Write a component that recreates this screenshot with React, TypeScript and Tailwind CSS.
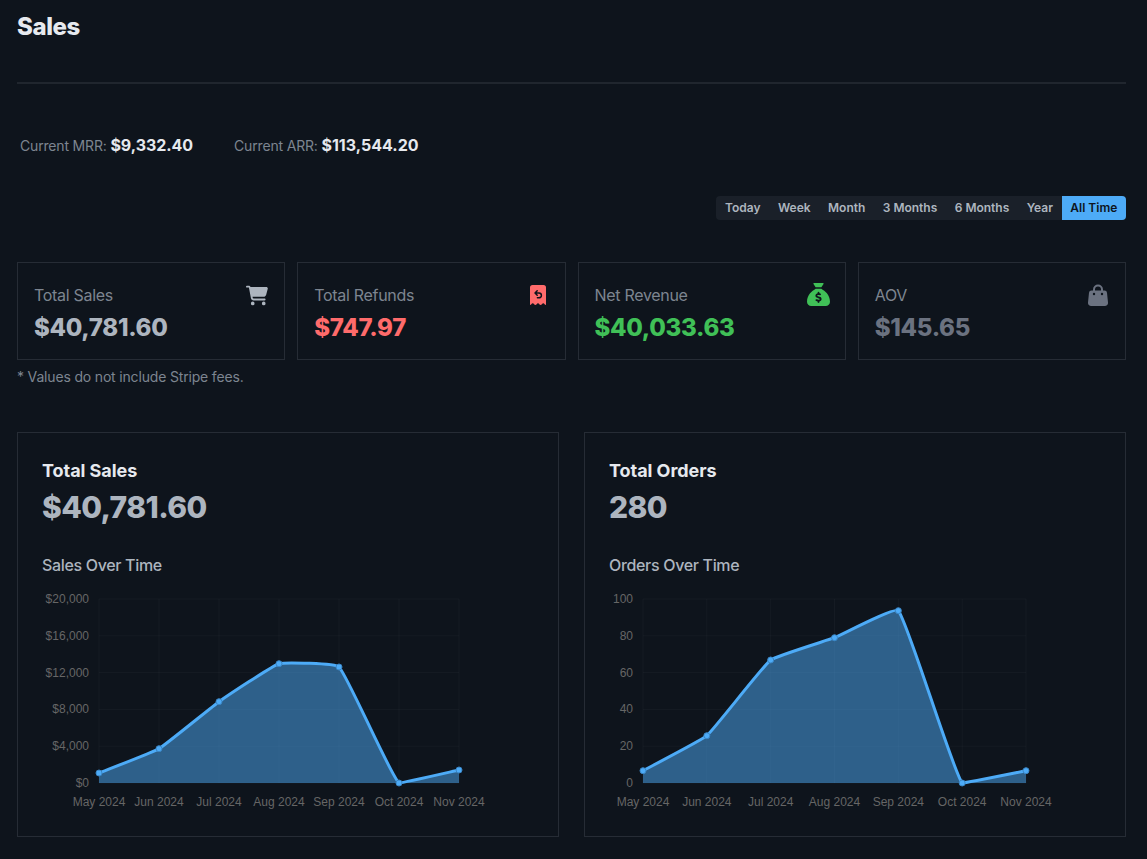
import type { ReactNode } from "react";
import { FaCartShopping, FaSackDollar } from "react-icons/fa6";

const ranges = ["Today", "Week", "Month", "3 Months", "6 Months", "Year"];
const months = ["May 2024", "Jun 2024", "Jul 2024", "Aug 2024", "Sep 2024", "Oct 2024", "Nov 2024"];

type Pt = [number, number];

const TOP = 11;
const BOTTOM = 195;

// same idea as a chart.js spline with low tension, control points kept inside the plot
const linePath = (pts: Pt[]) => {
  const tension = 0.1;
  const ctrl = pts.map((p, i) => {
    const prev = pts[Math.max(i - 1, 0)];
    const next = pts[Math.min(i + 1, pts.length - 1)];
    const d1 = Math.hypot(p[0] - prev[0], p[1] - prev[1]);
    const d2 = Math.hypot(next[0] - p[0], next[1] - p[1]);
    const fa = (tension * d1) / (d1 + d2);
    const fb = (tension * d2) / (d1 + d2);
    const clamp = (y: number) => Math.min(BOTTOM, Math.max(TOP, y));
    return {
      inn: [p[0] - fa * (next[0] - prev[0]), clamp(p[1] - fa * (next[1] - prev[1]))],
      out: [p[0] + fb * (next[0] - prev[0]), clamp(p[1] + fb * (next[1] - prev[1]))],
    };
  });
  let d = `M${pts[0][0]} ${pts[0][1]}`;
  for (let i = 0; i < pts.length - 1; i++) {
    d += ` C${ctrl[i].out[0]} ${ctrl[i].out[1]} ${ctrl[i + 1].inn[0]} ${ctrl[i + 1].inn[1]} ${pts[i + 1][0]} ${pts[i + 1][1]}`;
  }
  return d;
};

const AreaChart = ({ points, ticks, left, right }: { points: number[]; ticks: string[]; left: number; right: number }) => {
  const step = (right - left) / 6;
  const pts: Pt[] = points.map((y, i) => [left + step * i, y]);
  const line = linePath(pts);
  return (
    <svg width="492" height="226" viewBox="0 0 492 226" className="block mt-[11px]">
      {ticks.map((_, i) => {
        const y = TOP + ((BOTTOM - TOP) * i) / 5;
        return <line key={i} x1={left} x2={right} y1={y} y2={y} stroke="#ffffff" strokeOpacity="0.03" />;
      })}
      {months.map((_, i) => (
        <line key={i} x1={left + step * i} x2={left + step * i} y1={TOP} y2={BOTTOM} stroke="#ffffff" strokeOpacity="0.03" />
      ))}
      <path d={`${line} L${right} ${BOTTOM} L${left} ${BOTTOM} Z`} fill="#4dabf7" fillOpacity="0.5" />
      <path d={line} fill="none" stroke="#4dabf7" strokeWidth="3" />
      {pts.map(([x, y], i) => (
        <circle key={i} cx={x} cy={y} r="3" fill="#4dabf7" stroke="#3a85c4" />
      ))}
      {ticks.map((label, i) => (
        <text key={label} x={left - 10} y={TOP + ((BOTTOM - TOP) * i) / 5 + 4} textAnchor="end" fontSize="12" fill="#666666" fontFamily="'Liberation Sans', sans-serif">
          {label}
        </text>
      ))}
      {months.map((label, i) => (
        <text key={label} x={left + step * i} y={218} textAnchor="middle" fontSize="12" fill="#666666" fontFamily="'Liberation Sans', sans-serif">
          {label}
        </text>
      ))}
    </svg>
  );
};

const RefundIcon = () => (
  <svg width="16" height="20" viewBox="0 0 16 20" className="mt-[1px] mr-[3px]">
    <path
      d="M2.5 0H13.5A2.5 2.5 0 0 1 16 2.5V20C14.8 20 14.4 18.2 13.3 18.2S11.6 20 10.6 20 9.1 18.2 8 18.2 6.4 20 5.4 20 3.9 18.2 2.7 18.2 1.2 20 0 20V2.5A2.5 2.5 0 0 1 2.5 0Z"
      fill="#ff6b6b"
    />
    <path d="M7.2 5.8 5 8l2.2 2.2M5.2 8H9a2.4 2.4 0 0 1 0 4.8H7.4" fill="none" stroke="#0e141c" strokeWidth="1.5" strokeLinecap="round" strokeLinejoin="round" />
  </svg>
);

const BagIcon = () => (
  <svg width="20" height="22" viewBox="0 0 20 22" className="mt-0 mr-[1px]">
    <path d="M6 8V5.5a4 4 0 0 1 8 0V8" fill="none" stroke="#6b7280" strokeWidth="2" />
    <path d="M3.5 6.5H16.5A2.5 2.5 0 0 1 19 8.8L20 18.5A3.2 3.2 0 0 1 16.8 22H3.2A3.2 3.2 0 0 1 0 18.5L1 8.8A2.5 2.5 0 0 1 3.5 6.5Z" fill="#6b7280" />
    <circle cx="6" cy="10" r="1.2" fill="#0e141c" />
    <circle cx="14" cy="10" r="1.2" fill="#0e141c" />
  </svg>
);

const StatCard = ({ label, value, icon, valueClass }: { label: string; value: string; icon: ReactNode; valueClass: string }) => (
  <div className="border border-[#262c35] h-[98px] pl-4 pr-[16px] pt-[21px] flex justify-between">
    <div>
      <div className="text-base leading-[22px] tracking-[-0.3px] text-[#7d8590]">{label}</div>
      <div className={`text-2xl leading-[32px] font-extrabold tracking-[-0.3px] mt-[6px] ${valueClass}`}>{value}</div>
    </div>
    {icon}
  </div>
);

const ChartCard = ({ title, value, sub, children }: { title: string; value: string; sub: string; children: ReactNode }) => (
  <div className="border border-[#262c35] h-[405px] px-6 pt-[26px]">
    <h3 className="text-lg leading-6 font-bold tracking-[-0.05px] text-[#e6e9ee]">{title}</h3>
    <div className="text-[30px] leading-9 font-extrabold tracking-[-0.6px] text-[#adb5bf] mt-[6px]">{value}</div>
    <div className="text-base leading-6 font-medium tracking-[-0.33px] text-[#adb5bf] mt-[28px]">{sub}</div>
    {children}
  </div>
);

export default function App() {
  return (
    <div className="min-h-[859px] bg-[#0e141c] pl-[17px] pr-[21px] pt-[11px] font-['Inter',sans-serif]">
      <h1 className="text-[24px] leading-8 font-extrabold tracking-[-0.4px] text-[#e6e9ee]">Sales</h1>
      <hr className="mt-[39px] border-t-2 border-[#20262e]" />

      <div className="flex mt-[49px] pl-[3px] gap-[41px] text-sm leading-6 tracking-[-0.17px] text-[#7d8590]">
        <div>
          Current MRR: <span className="text-base font-bold tracking-[-0.05px] text-[#e6e9ee]">$9,332.40</span>
        </div>
        <div>
          Current ARR: <span className="text-base font-bold tracking-[0px] text-[#e6e9ee]">$113,544.20</span>
        </div>
      </div>

      <div className="flex justify-end mt-[38px]">
        <div className="flex bg-[#1a2029] rounded text-xs leading-6 font-semibold text-[#adb5bf]">
          {ranges.map((r) => (
            <button key={r} className="px-[8.7px]">
              {r}
            </button>
          ))}
          <button className="px-[8.7px] rounded-r bg-[#4dabf7] text-[#0e141c]">All Time</button>
        </div>
      </div>

      <div className="grid grid-cols-4 gap-3 mt-[42px]">
        <StatCard label="Total Sales" value="$40,781.60" valueClass="text-[#adb5bf]" icon={<FaCartShopping className="w-[22px] h-[21px] mt-[1px] text-[#adb5bf]" />} />
        <StatCard label="Total Refunds" value="$747.97" valueClass="text-[#ff6b6b]" icon={<RefundIcon />} />
        <StatCard label="Net Revenue" value="$40,033.63" valueClass="text-[#40c057]" icon={<FaSackDollar className="w-[23px] h-[23px] mt-[-1px] mr-[-1px] text-[#40c057]" />} />
        <StatCard label="AOV" value="$145.65" valueClass="text-[#6b7280]" icon={<BagIcon />} />
      </div>

      <p className="mt-2 text-sm leading-[18px] tracking-[-0.17px] text-[#7d8590]">* Values do not include Stripe fees.</p>

      <div className="grid grid-cols-2 gap-[25px] mt-[46px]">
        <ChartCard title="Total Sales" value="$40,781.60" sub="Sales Over Time">
          <AreaChart left={57} right={417} points={[185, 160.7, 113.7, 75.7, 79, 195, 182]} ticks={["$20,000", "$16,000", "$12,000", "$8,000", "$4,000", "$0"]} />
        </ChartCard>
        <ChartCard title="Total Orders" value="280" sub="Orders Over Time">
          <AreaChart left={34} right={417} points={[182.7, 147.7, 72, 49.7, 22.7, 195, 182.7]} ticks={["100", "80", "60", "40", "20", "0"]} />
        </ChartCard>
      </div>
    </div>
  );
}
